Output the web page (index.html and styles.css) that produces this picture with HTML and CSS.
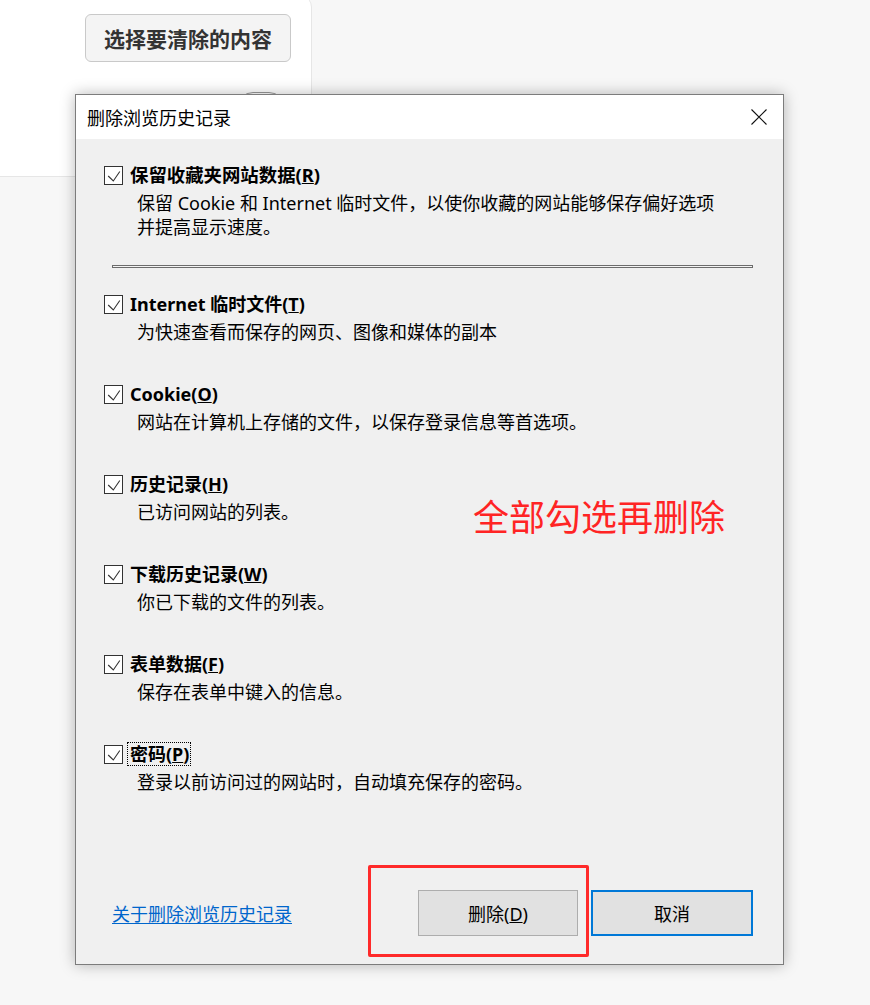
FILE: index.html
```html
<!DOCTYPE html>
<html lang="zh-CN">
<head>
<meta charset="utf-8">
<title>删除浏览历史记录</title>
<link rel="stylesheet" href="styles.css">
</head>
<body>
<div class="panel">
  <button class="pick">选择要清除的内容</button>
  <div class="peek"></div>
</div>

<div class="dlg">
  <div class="titlebar">
    <span class="title">删除浏览历史记录</span>
    <svg class="close" width="16" height="16" viewBox="0 0 16 16"><path d="M0.5 0.5 L15.5 15.5 M15.5 0.5 L0.5 15.5" stroke="#111" stroke-width="1.1" fill="none"/></svg>
  </div>
  <div class="body">
    <div class="item">
      <div class="head"><span class="cb"><svg width="19" height="19" viewBox="0 0 19 19"><polyline points="4.2,10 9.3,15 15.8,5.5" fill="none" stroke="#333" stroke-width="1.1"/></svg></span><span class="lbl big">保留收藏夹网站数据(<u>R</u>)</span></div>
      <div class="desc">保留 Cookie 和 Internet 临时文件，以使你收藏的网站能够保存偏好选项<br>并提高显示速度。</div>
    </div>
    <div class="sep"></div>
    <div class="item">
      <div class="head"><span class="cb"><svg width="19" height="19" viewBox="0 0 19 19"><polyline points="4.2,10 9.3,15 15.8,5.5" fill="none" stroke="#333" stroke-width="1.1"/></svg></span><span class="lbl">Internet 临时文件(<u>T</u>)</span></div>
      <div class="desc">为快速查看而保存的网页、图像和媒体的副本</div>
    </div>
    <div class="item">
      <div class="head"><span class="cb"><svg width="19" height="19" viewBox="0 0 19 19"><polyline points="4.2,10 9.3,15 15.8,5.5" fill="none" stroke="#333" stroke-width="1.1"/></svg></span><span class="lbl">Cookie(<u>O</u>)</span></div>
      <div class="desc">网站在计算机上存储的文件，以保存登录信息等首选项。</div>
    </div>
    <div class="item">
      <div class="head"><span class="cb"><svg width="19" height="19" viewBox="0 0 19 19"><polyline points="4.2,10 9.3,15 15.8,5.5" fill="none" stroke="#333" stroke-width="1.1"/></svg></span><span class="lbl">历史记录(<u>H</u>)</span></div>
      <div class="desc">已访问网站的列表。</div>
    </div>
    <div class="item">
      <div class="head"><span class="cb"><svg width="19" height="19" viewBox="0 0 19 19"><polyline points="4.2,10 9.3,15 15.8,5.5" fill="none" stroke="#333" stroke-width="1.1"/></svg></span><span class="lbl">下载历史记录(<u>W</u>)</span></div>
      <div class="desc">你已下载的文件的列表。</div>
    </div>
    <div class="item">
      <div class="head"><span class="cb"><svg width="19" height="19" viewBox="0 0 19 19"><polyline points="4.2,10 9.3,15 15.8,5.5" fill="none" stroke="#333" stroke-width="1.1"/></svg></span><span class="lbl">表单数据(<u>F</u>)</span></div>
      <div class="desc">保存在表单中键入的信息。</div>
    </div>
    <div class="item">
      <div class="head"><span class="cb"><svg width="19" height="19" viewBox="0 0 19 19"><polyline points="4.2,10 9.3,15 15.8,5.5" fill="none" stroke="#333" stroke-width="1.1"/></svg></span><span class="lbl focus">密码(<u>P</u>)</span></div>
      <div class="desc">登录以前访问过的网站时，自动填充保存的密码。</div>
    </div>

    <div class="footer">
      <a class="link" href="#">关于删除浏览历史记录</a>
      <button class="btn del">删除(<u>D</u>)</button>
      <button class="btn cancel">取消</button>
    </div>
  </div>
  <div class="note">全部勾选再删除</div>
  <div class="mark"></div>
</div>
</body>
</html>
```

FILE: styles.css
```css
html, body {
  margin: 0;
  padding: 0;
  background: #f7f7f7;
}
body {
  font-family: "Noto Sans", "Noto Sans CJK SC", sans-serif;
  color: #000;
}
.panel {
  margin-top: -4px;
  width: 312px;
  height: 181px;
  box-sizing: border-box;
  background: #fff;
  border-right: 1px solid #e6e6e6;
  border-bottom: 1px solid #e6e6e6;
  border-radius: 0 11px 11px 0;
  padding: 18px 0 0 85px;
}
.pick {
  display: block;
  width: 206px;
  height: 48px;
  border: 1px solid #c9c9c9;
  border-radius: 6px;
  background: #f4f4f4;
  font-family: "Noto Sans CJK SC", sans-serif;
  font-weight: 700;
  font-size: 21px;
  color: #333;
  padding: 0;
}
.peek {
  margin: 30px 0 0 152px;
  width: 48px;
  height: 36px;
  box-sizing: border-box;
  border: 1px solid #9a9a9a;
  border-radius: 16px;
  background: #fff;
}
.dlg {
  position: absolute;
  left: 75px;
  top: 94px;
  width: 709px;
  height: 871px;
  box-sizing: border-box;
  border: 1px solid #7c7c7c;
  background: #f0f0f0;
  display: flex;
  flex-direction: column;
  box-shadow: 0 0 14px rgba(0, 0, 0, 0.28);
}
.titlebar {
  height: 44px;
  flex: none;
  background: #fff;
  display: flex;
  align-items: center;
  justify-content: space-between;
  padding: 0 16px 0 11px;
}
.title {
  font-family: "Noto Sans CJK SC", sans-serif;
  font-size: 18px;
  line-height: 24px;
  margin-top: -1px;
}
.close {
  display: block;
}
.body {
  flex: 1;
  display: flex;
  flex-direction: column;
  padding: 24px 30px 28px 28px;
}
.item + .item {
  margin-top: 38px;
}
.head {
  display: flex;
  align-items: center;
  height: 24px;
}
.cb {
  width: 19px;
  height: 19px;
  box-sizing: border-box;
  border: 1px solid #333;
  background: #fff;
  margin-right: 5px;
  position: relative;
  flex: none;
}
.cb svg {
  position: absolute;
  left: -1px;
  top: -1px;
}
.lbl {
  font-family: "Noto Sans", "Noto Sans CJK SC", sans-serif;
  font-weight: 700;
  font-size: 18px;
  line-height: 22px;
  padding: 0 1px 0 2px;
}
.big {
  font-size: 18.4px;
}
.focus {
  outline: 1px dotted #000;
}
.desc {
  margin: 4px 0 0 33px;
  font-size: 18px;
  line-height: 24px;
}
.sep {
  margin: 26px 0 24px 8px;
  height: 1px;
  border: 1px solid #6c6c6c;
  background: #f4f4f4;
}
.footer {
  margin-top: auto;
  height: 46px;
  display: flex;
  align-items: center;
}
.link {
  margin-left: 8px;
  font-family: "Noto Sans CJK SC", sans-serif;
  font-size: 18px;
  color: #0066cc;
  text-decoration: underline;
  text-underline-offset: 2px;
  margin-right: auto;
}
.btn {
  height: 46px;
  box-sizing: border-box;
  background: #e1e1e1;
  font-family: "Noto Sans", "Noto Sans CJK SC", sans-serif;
  font-size: 18px;
  color: #000;
  padding: 0;
}
.del {
  width: 160px;
  border: 1px solid #adadad;
}
.cancel {
  width: 162px;
  margin-left: 13px;
  border: 2px solid #0078d7;
}
.note {
  position: absolute;
  left: 397px;
  top: 398px;
  font-family: "Noto Sans CJK SC", sans-serif;
  font-size: 36px;
  line-height: 44px;
  color: #ff2424;
}
.mark {
  position: absolute;
  left: 292px;
  top: 770px;
  width: 221px;
  height: 92px;
  box-sizing: border-box;
  border: 3px solid #ff2a2a;
  border-radius: 2px;
}
```
